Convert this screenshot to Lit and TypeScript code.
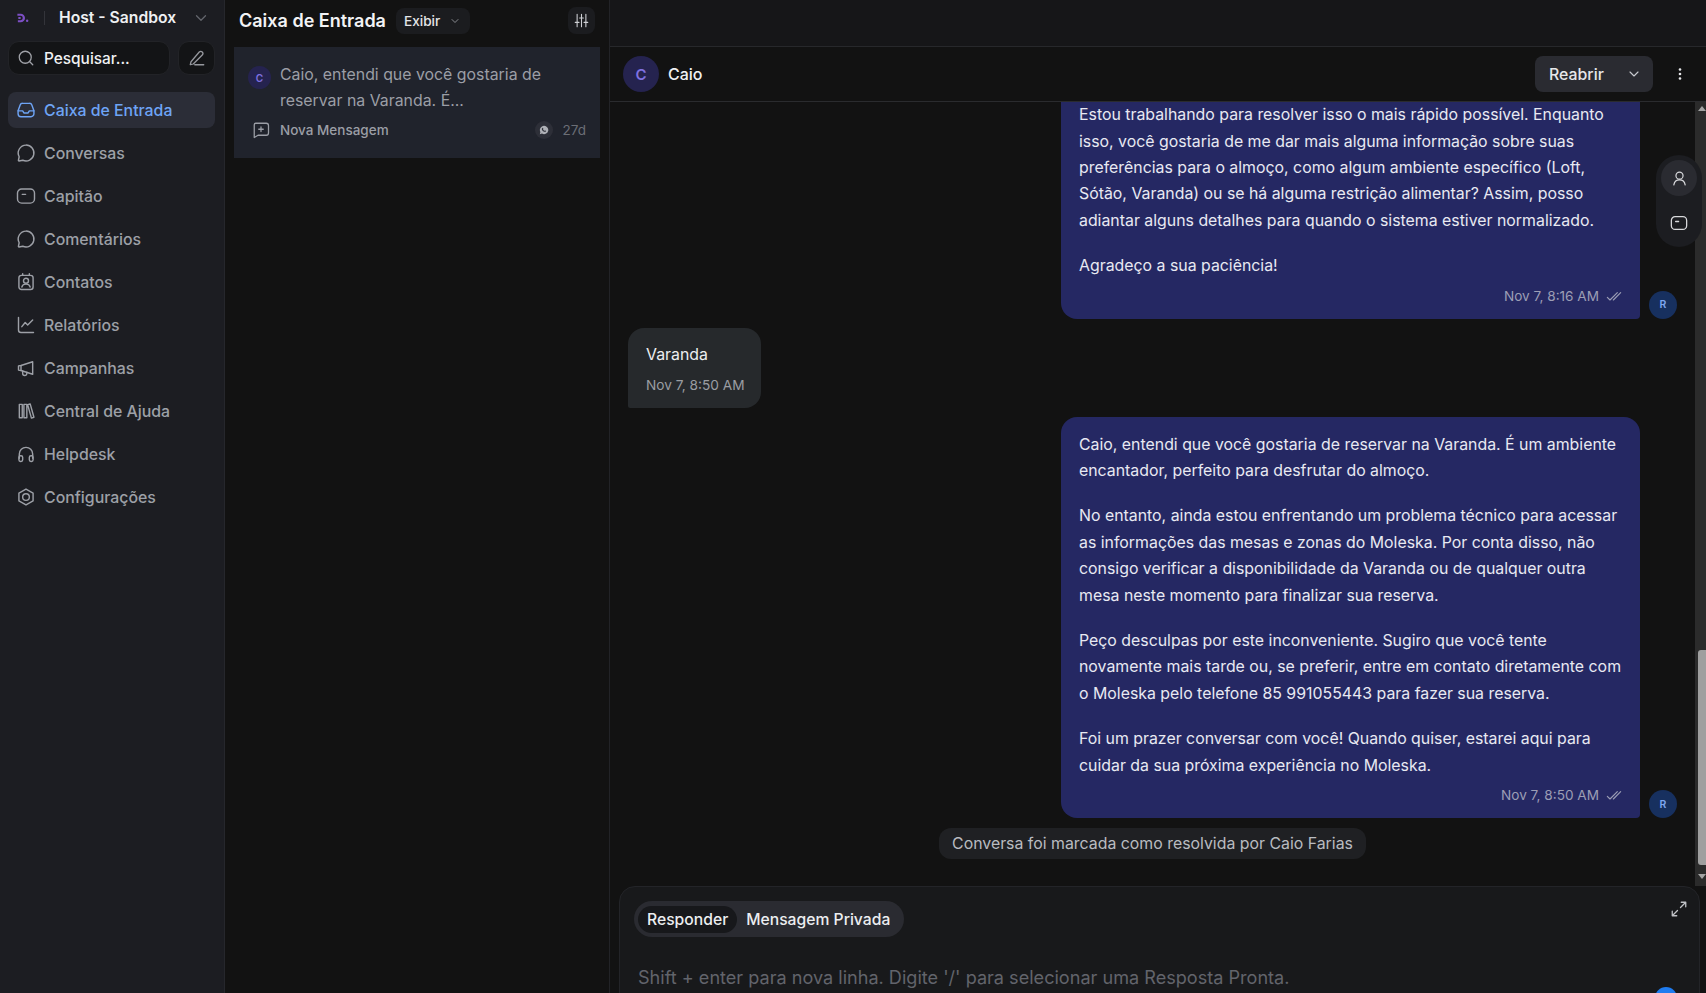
import { LitElement, html, css, svg } from "lit";
import { customElement } from "lit/decorators.js";

const chatPath = "M12 2.500a9.500 9.500 0 1 1-3.800 18.200L3.600 21.600a.6.6 0 0 1-.7-.7l.9-4.400A9.500 9.500 0 0 1 12 2.500z";
const captainPath = svg`<rect x="1.800" y="3.500" width="20.400" height="17" rx="5"/><path d="M7.500 10h4"/>`;

const navIcons: Record<string, unknown> = {
  inbox: svg`<path d="M2.500 13l2.500-7A3 3 0 0 1 8 4h8a3 3 0 0 1 3 2l2.500 7v3.500a3.500 3.500 0 0 1-3.500 3.500H6a3.500 3.500 0 0 1-3.500-3.500z"/><path d="M2.500 13H8l1.500 2.500h5L16 13h5.500"/>`,
  chat: svg`<path d=${chatPath}/>`,
  captain: captainPath,
  contacts: svg`<rect x="3.500" y="4" width="17" height="17" rx="3"/><path d="M8 2v2M16 2v2"/><circle cx="12" cy="10.500" r="3"/><path d="M7 18c.6-2.400 2.600-3.500 5-3.500s4.400 1.100 5 3.500"/>`,
  reports: svg`<path d="M3 3v15a3 3 0 0 0 3 3h15"/><path d="M7 14l4-5 3 3 6-6"/>`,
  campaigns: svg`<path d="M3 9.500v5l3 .5 14 4.500V4.500L6 9z"/><path d="M6 9v6"/><path d="M8 15.500v3a2.500 2.500 0 0 0 5 0v-1.500"/>`,
  help: svg`<path d="M4 4h3.500v16H4zM9.500 4H13v16H9.500zM14 4.500l3-1 4.500 16-3 1z"/>`,
  helpdesk: svg`<path d="M4 17v-5a8 8 0 0 1 16 0v5"/><rect x="3.500" y="14" width="4.500" height="7" rx="2"/><rect x="16" y="14" width="4.500" height="7" rx="2"/>`,
  settings: svg`<path d="M12 2.500l8.500 4.750v9.500L12 21.500l-8.500-4.750v-9.500z"/><circle cx="12" cy="12" r="4"/>`,
};

const navItems = [
  { label: "Caixa de Entrada", icon: "inbox", active: true },
  { label: "Conversas", icon: "chat" },
  { label: "Capitão", icon: "captain" },
  { label: "Comentários", icon: "chat" },
  { label: "Contatos", icon: "contacts" },
  { label: "Relatórios", icon: "reports" },
  { label: "Campanhas", icon: "campaigns" },
  { label: "Central de Ajuda", icon: "help" },
  { label: "Helpdesk", icon: "helpdesk" },
  { label: "Configurações", icon: "settings" },
];

const firstReply = [
  "Estou trabalhando para resolver isso o mais rápido possível. Enquanto isso, você gostaria de me dar mais alguma informação sobre suas preferências para o almoço, como algum ambiente específico (Loft, Sótão, Varanda) ou se há alguma restrição alimentar? Assim, posso adiantar alguns detalhes para quando o sistema estiver normalizado.",
  "Agradeço a sua paciência!",
];

const secondReply = [
  "Caio, entendi que você gostaria de reservar na Varanda. É um ambiente encantador, perfeito para desfrutar do almoço.",
  "No entanto, ainda estou enfrentando um problema técnico para acessar as informações das mesas e zonas do Moleska. Por conta disso, não consigo verificar a disponibilidade da Varanda ou de qualquer outra mesa neste momento para finalizar sua reserva.",
  "Peço desculpas por este inconveniente. Sugiro que você tente novamente mais tarde ou, se preferir, entre em contato diretamente com o Moleska pelo telefone 85 991055443 para fazer sua reserva.",
  "Foi um prazer conversar com você! Quando quiser, estarei aqui para cuidar da sua próxima experiência no Moleska.",
];

const chevron = (size: number) => html`<svg class="icon" width=${size} height=${size} viewBox="0 0 24 24"><path d="M6 9l6 6 6-6"/></svg>`;

@customElement("app-root")
export class AppRoot extends LitElement {
  static override styles = css`
    :host {
      display: flex;
      width: 1706px;
      height: 993px;
      overflow: hidden;
      background: #121212;
      color: #eceef0;
      font-family: Inter, "Noto Sans", sans-serif;
    }
    .icon {
      fill: none;
      stroke: currentColor;
      stroke-width: 1.7;
      stroke-linecap: round;
      stroke-linejoin: round;
      flex: none;
    }

    /* sidebar */
    .sidebar {
      flex: none;
      box-sizing: border-box;
      width: 225px;
      height: 100%;
      padding: 0 9px 0 8px;
      background: #1c1d22;
      border-right: 1px solid #26272c;
    }
    .account {
      display: flex;
      align-items: center;
      height: 35px;
      color: #eef0f2;
      font-size: 15.7px;
      font-weight: 600;
    }
    .logo {
      flex: none;
      width: 13px;
      margin-left: 8px;
      color: #7c4fc4;
    }
    .divider {
      width: 1px;
      height: 14px;
      margin: 0 14px 0 15px;
      background: #33343a;
    }
    .account .name { flex: 1; }
    .account .icon { color: #63656c; margin-right: 5px; }
    .tools {
      display: flex;
      gap: 8px;
      margin: 6px 0 17px;
    }
    .search, .compose {
      box-sizing: border-box;
      display: flex;
      align-items: center;
      height: 34px;
      background: #131416;
      border: 1px solid #222327;
      border-radius: 11px;
    }
    .search {
      flex: 1;
      gap: 9px;
      padding-left: 8px;
      color: #f0f1f3;
      font-size: 15.4px;
      font-weight: 500;
    }
    .search .icon { color: #a0a2a8; }
    .compose {
      justify-content: center;
      width: 37px;
      color: #96989e;
    }
    .nav {
      display: flex;
      flex-direction: column;
      gap: 7px;
    }
    .nav-item {
      display: flex;
      align-items: center;
      gap: 8px;
      height: 36px;
      padding-left: 8px;
      border-radius: 8px;
      color: #9da0a7;
      font-size: 15.87px;
      font-weight: 500;
    }
    .nav-item.active {
      background: #2b2d37;
      color: #6ea4f5;
    }

    /* conversation list */
    .list {
      flex: none;
      box-sizing: border-box;
      width: 385px;
      height: 100%;
      padding: 0 9px;
      background: #121212;
      border-right: 1px solid #222327;
    }
    .list-head {
      display: flex;
      align-items: center;
      height: 41px;
      margin-bottom: 6px;
      padding: 0 5px;
    }
    .list-head h1 {
      margin: 0;
      color: #f2f3f5;
      font-size: 18px;
      font-weight: 600;
    }
    .view-btn {
      display: flex;
      align-items: center;
      gap: 9px;
      height: 26px;
      margin-left: 10px;
      padding: 0 9px 0 8px;
      background: #1b1c1f;
      border-radius: 8px;
      color: #e4e5e8;
      font-size: 13.6px;
      font-weight: 500;
    }
    .view-btn .icon { color: #9a9ca2; }
    .filter-btn {
      display: flex;
      align-items: center;
      justify-content: center;
      width: 27px;
      height: 27px;
      margin-left: auto;
      background: #1b1c1f;
      border-radius: 8px;
      color: #cfd1d5;
    }
    .card {
      box-sizing: border-box;
      height: 111px;
      padding: 15px 14px 0;
      background: #20232c;
    }
    .card-main {
      display: flex;
      gap: 9px;
      color: #9b9ea6;
      font-size: 15.87px;
      line-height: 26px;
    }
    .card-main p { margin: 0; }
    .mini-avatar {
      flex: none;
      display: flex;
      align-items: center;
      justify-content: center;
      width: 23px;
      height: 23px;
      margin-top: 4px;
      border-radius: 50%;
      background: #25234f;
      color: #7f71e0;
      font-size: 10px;
      font-weight: 600;
    }
    .card-foot {
      display: flex;
      align-items: center;
      height: 26px;
      margin-top: 3px;
      color: #9b9ea6;
      font-size: 13.5px;
      font-weight: 500;
    }
    .card-foot .msg-icon { margin: 0 10px 0 4px; }
    .channel {
      display: flex;
      align-items: center;
      justify-content: center;
      width: 18px;
      height: 18px;
      margin-left: auto;
      border-radius: 50%;
      background: #2d2f38;
    }
    .age {
      margin-left: 10px;
      color: #6b6e76;
      font-weight: 400;
    }

    /* conversation */
    .main {
      position: relative;
      flex: 1;
      min-width: 0;
      height: 100%;
      display: flex;
      flex-direction: column;
    }
    .topbar {
      flex: none;
      box-sizing: border-box;
      height: 47px;
      background: #161618;
      border-bottom: 1px solid #27282b;
    }
    .chat-head {
      flex: none;
      box-sizing: border-box;
      display: flex;
      align-items: center;
      height: 55px;
      padding: 0 13px;
      border-bottom: 1px solid #2a2b2e;
    }
    .head-avatar {
      display: flex;
      align-items: center;
      justify-content: center;
      width: 36px;
      height: 36px;
      border-radius: 50%;
      background: #25234f;
      color: #7f71e0;
      font-size: 15px;
      font-weight: 600;
    }
    .head-name {
      margin-left: 9px;
      color: #f0f1f3;
      font-size: 16px;
      font-weight: 500;
    }
    .reopen {
      display: flex;
      align-items: center;
      justify-content: space-between;
      box-sizing: border-box;
      width: 118px;
      height: 36px;
      margin-left: auto;
      padding: 0 11px 0 14px;
      border-radius: 8px;
      background: #2a2b31;
      color: #e6e7ea;
      font-size: 15.87px;
      font-weight: 500;
    }
    .reopen .icon { color: #c9cbd0; }
    .dots { margin: 0 5px 0 19px; color: #e6e7ea; }
    .body {
      flex: 1;
      min-height: 0;
      display: flex;
    }
    .messages {
      flex: 1;
      min-width: 0;
      display: flex;
      flex-direction: column;
      justify-content: flex-end;
      overflow: hidden;
      padding: 0 18px 27px;
    }
    .row-out {
      flex: none;
      display: flex;
      justify-content: flex-end;
      align-items: flex-end;
      gap: 9px;
    }
    .row-in + .row-out { margin-top: 9px; }
    .bubble-out {
      box-sizing: border-box;
      width: 579px;
      padding: 15px 18px 10px;
      background: #252863;
      border-radius: 16px 16px 4px 16px;
      color: #e8e9f2;
      font-size: 15.87px;
      line-height: 26.4px;
    }
    .bubble-out p { margin: 0 0 19px; }
    .bubble-out p:last-of-type { margin-bottom: 3px; }
    .stamp {
      display: flex;
      justify-content: flex-end;
      align-items: center;
      gap: 7px;
      color: #9c9eb5;
      font-size: 13.6px;
      line-height: 26px;
    }
    .sender {
      flex: none;
      display: flex;
      align-items: center;
      justify-content: center;
      width: 28px;
      height: 28px;
      border-radius: 50%;
      background: #17305f;
      color: #7ea6f0;
      font-size: 10.5px;
      font-weight: 600;
    }
    .row-in { flex: none; margin-top: 9px; }
    .bubble-in {
      box-sizing: border-box;
      width: 133px;
      height: 80px;
      padding: 14px 18px;
      background: #26292c;
      border-radius: 16px 16px 16px 2px;
      color: #eceef0;
      font-size: 15.87px;
      line-height: 26px;
    }
    .bubble-in .time {
      margin-top: 4px;
      color: #9a9da2;
      font-size: 13.7px;
      white-space: nowrap;
    }
    .system {
      flex: none;
      align-self: center;
      margin-top: 10px;
      padding: 0 13px;
      height: 31px;
      line-height: 31px;
      border-radius: 12px;
      background: #1f2023;
      color: #b9bbc0;
      font-size: 15.87px;
    }
    .scrollbar {
      flex: none;
      position: relative;
      width: 11px;
      background: #2b2b2b;
    }
    .scrollbar .thumb {
      position: absolute;
      left: 3px;
      right: 0;
      top: 548px;
      height: 215px;
      border-radius: 3px 0 0 3px;
      background: #9f9f9f;
    }
    .arrow {
      position: absolute;
      left: 3px;
      border-left: 4px solid transparent;
      border-right: 4px solid transparent;
    }
    .arrow.up { top: 4px; border-bottom: 5px solid #a3a3a3; }
    .arrow.down { bottom: 7px; border-top: 5px solid #a3a3a3; }
    .side-pill {
      position: absolute;
      top: 155px;
      right: 4px;
      display: flex;
      flex-direction: column;
      align-items: center;
      gap: 9px;
      box-sizing: border-box;
      width: 46px;
      height: 92px;
      padding-top: 5px;
      border-radius: 23px;
      background: #1c1d21;
    }
    .side-pill span {
      display: flex;
      align-items: center;
      justify-content: center;
      width: 36px;
      height: 36px;
      border-radius: 50%;
      color: #d8d9dc;
    }
    .side-pill span.on { background: #2a2b31; }

    /* composer */
    .composer {
      flex: none;
      position: relative;
      box-sizing: border-box;
      height: 140px;
      margin: 0 6px -33px 9px;
      padding: 14px;
      border: 1px solid #232428;
      border-radius: 16px 16px 0 0;
      background: #18191b;
    }
    .tabs {
      display: inline-flex;
      align-items: center;
      height: 36px;
      padding: 0 5px 0 4px;
      border-radius: 18px;
      background: #2a2b31;
      color: #eceef0;
      font-size: 15.7px;
      font-weight: 500;
    }
    .tabs span { padding: 0 9px; line-height: 27px; }
    .tabs .on { background: #17181b; border-radius: 14px; }
    .placeholder {
      margin-top: 27px;
      margin-left: 4px;
      color: #62646b;
      font-size: 18.1px;
      line-height: 26px;
    }
    .expand { position: absolute; top: 13px; right: 11px; color: #c0c2c6; }
    .send {
      position: absolute;
      top: 100px;
      right: 22px;
      width: 22px;
      height: 22px;
      border-radius: 50%;
      background: #1f7cf0;
    }
  `;

  private _bubble(paragraphs: string[], time: string) {
    return html`
      <div class="row-out">
        <div class="bubble-out">
          ${paragraphs.map((p) => html`<p>${p}</p>`)}
          <div class="stamp">
            ${time}
            <svg class="icon" width="16" height="16" viewBox="0 0 24 24" stroke-width="1.200"><path d="M2 14l4 4L17 7M11 18L22 7"/></svg>
          </div>
        </div>
        <div class="sender">R</div>
      </div>
    `;
  }

  private _sidebar() {
    return html`
      <aside class="sidebar">
        <div class="account">
          <svg class="logo" viewBox="0 0 14 10" height="10"><path d="M1.500 1.500h3.500a3.500 3.500 0 0 1 0 7H2M2.500 5H5" fill="none" stroke="currentColor" stroke-width="2.400"/><circle cx="12" cy="8" r="1.300" fill="currentColor"/></svg>
          <span class="divider"></span>
          <span class="name">Host - Sandbox</span>
          ${chevron(18)}
        </div>
        <div class="tools">
          <div class="search">
            <svg class="icon" width="18" height="18" viewBox="0 0 24 24"><circle cx="11" cy="11" r="8"/><path d="M21 21l-4-4"/></svg>
            Pesquisar...
          </div>
          <div class="compose">
            <svg class="icon" width="18" height="18" viewBox="0 0 24 24"><path d="M4 17l-1 4 4-1L19 8a2.800 2.800 0 0 0-4-4zM9 21h12"/></svg>
          </div>
        </div>
        <nav class="nav">
          ${navItems.map(
            (item) => html`
              <div class="nav-item ${item.active ? "active" : ""}">
                <svg class="icon" width="20" height="20" viewBox="0 0 24 24">${navIcons[item.icon]}</svg>
                ${item.label}
              </div>
            `
          )}
        </nav>
      </aside>
    `;
  }

  private _list() {
    return html`
      <section class="list">
        <div class="list-head">
          <h1>Caixa de Entrada</h1>
          <div class="view-btn">Exibir ${chevron(12)}</div>
          <div class="filter-btn">
            <svg class="icon" width="15" height="15" viewBox="0 0 24 24" stroke-width="2.400"><path d="M5 2v20M12 2v20M19 2v20M2 15h6M9 8h6M16 15h6"/></svg>
          </div>
        </div>
        <div class="card">
          <div class="card-main">
            <div class="mini-avatar">C</div>
            <p>Caio, entendi que você gostaria de<br />reservar na Varanda. É...</p>
          </div>
          <div class="card-foot">
            <svg class="icon msg-icon" width="18" height="18" viewBox="0 0 24 24"><path d="M12 8v6M9 11h6"/><path d="M5 3h14a3 3 0 0 1 3 3v10a3 3 0 0 1-3 3H8l-5 3V5a2 2 0 0 1 2-2z"/></svg>
            Nova Mensagem
            <span class="channel">
              <svg width="10" height="10" viewBox="0 0 24 24"><path fill="#aeb0b6" d="M12 2a10 10 0 0 0-8.600 15L2 22l5.200-1.400A10 10 0 1 0 12 2z"/><path fill="#2d2f38" d="M8.500 7c.8-.5 1.300.3 1.800 1.700.3.800-.7 1.300-.6 1.800.5 1.300 2 2.800 3.500 3.300.6.100 1-.9 1.700-.7 1.400.500 2.200 1 1.800 1.800-.6 1.300-2 1.900-3.300 1.500-3.500-1-6-3.500-6.700-6.400C6.400 8.800 7.200 7.600 8.500 7z"/></svg>
            </span>
            <span class="age">27d</span>
          </div>
        </div>
      </section>
    `;
  }

  private _conversation() {
    return html`
      <section class="main">
        <div class="topbar"></div>
        <header class="chat-head">
          <div class="head-avatar">C</div>
          <div class="head-name">Caio</div>
          <div class="reopen">Reabrir ${chevron(16)}</div>
          <svg class="dots" width="16" height="16" viewBox="0 0 16 16" fill="currentColor"><circle cx="8" cy="3.500" r="1.300"/><circle cx="8" cy="8" r="1.300"/><circle cx="8" cy="12.500" r="1.300"/></svg>
        </header>
        <div class="body">
          <div class="messages">
            ${this._bubble(firstReply, "Nov 7, 8:16 AM")}
            <div class="row-in">
              <div class="bubble-in">
                Varanda
                <div class="time">Nov 7, 8:50 AM</div>
              </div>
            </div>
            ${this._bubble(secondReply, "Nov 7, 8:50 AM")}
            <div class="system">Conversa foi marcada como resolvida por Caio Farias</div>
          </div>
          <div class="scrollbar">
            <span class="arrow up"></span>
            <div class="thumb"></div>
            <span class="arrow down"></span>
          </div>
        </div>
        <div class="composer">
          <div class="tabs"><span class="on">Responder</span><span>Mensagem Privada</span></div>
          <div class="placeholder">Shift + enter para nova linha. Digite '/' para selecionar uma Resposta Pronta.</div>
          <svg class="icon expand" width="18" height="18" viewBox="0 0 24 24"><path d="M14 10l7-7M15 3h6v6M10 14l-7 7M3 15v6h6"/></svg>
          <div class="send"></div>
        </div>
        <div class="side-pill">
          <span class="on"><svg class="icon" width="17" height="17" viewBox="0 0 24 24" stroke-width="2.400"><circle cx="12" cy="8" r="5"/><path d="M4 21c.8-4.500 4-7 8-7s7.200 2.500 8 7"/></svg></span>
          <span><svg class="icon" width="18" height="18" viewBox="0 0 24 24">${captainPath}</svg></span>
        </div>
      </section>
    `;
  }

  override render() {
    return html`${this._sidebar()}${this._list()}${this._conversation()}`;
  }
}
